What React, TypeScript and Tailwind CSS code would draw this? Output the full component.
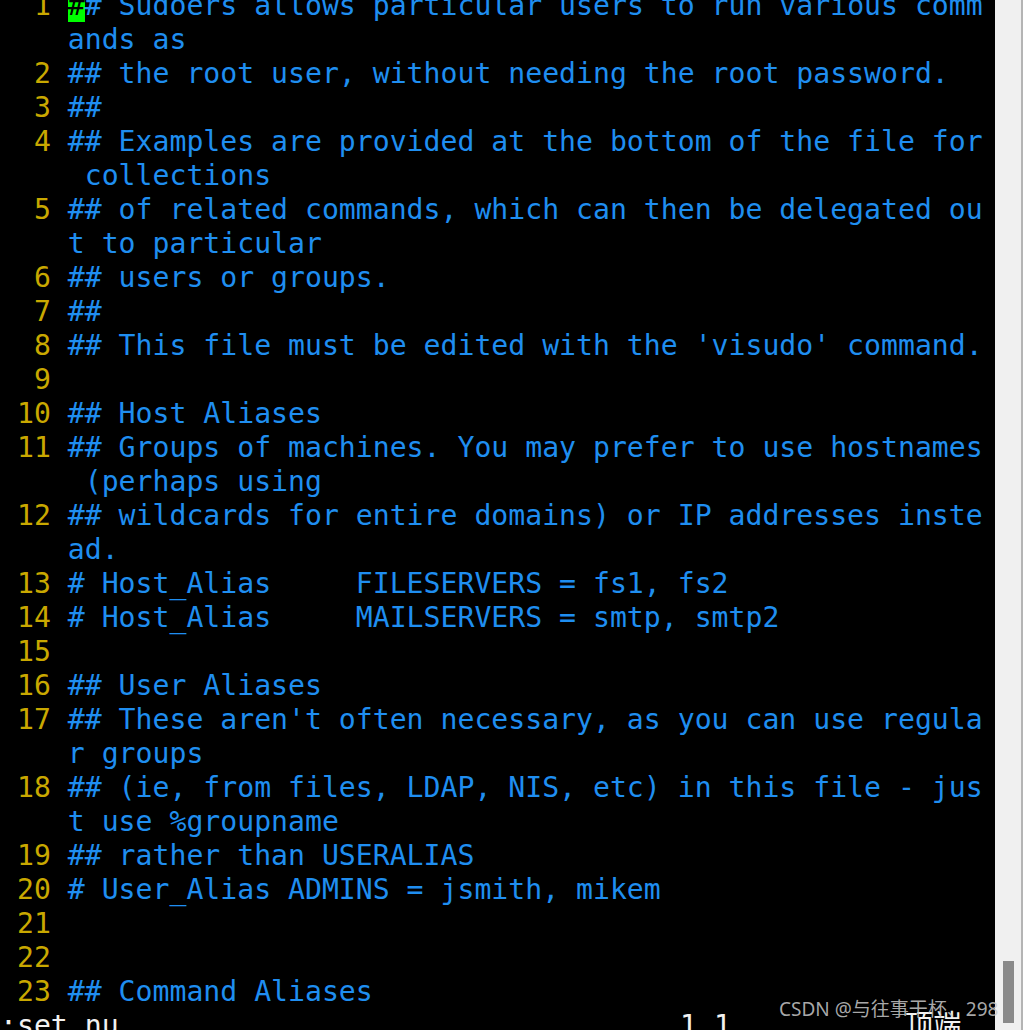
import React from "react";

type Row = { num?: string; text: string; cursor?: boolean };

const lines: { n: number; parts: string[] }[] = [
  { n: 1, parts: ["## Sudoers allows particular users to run various comm", "ands as"] },
  { n: 2, parts: ["## the root user, without needing the root password."] },
  { n: 3, parts: ["##"] },
  { n: 4, parts: ["## Examples are provided at the bottom of the file for", " collections"] },
  { n: 5, parts: ["## of related commands, which can then be delegated ou", "t to particular"] },
  { n: 6, parts: ["## users or groups."] },
  { n: 7, parts: ["##"] },
  { n: 8, parts: ["## This file must be edited with the 'visudo' command."] },
  { n: 9, parts: [""] },
  { n: 10, parts: ["## Host Aliases"] },
  { n: 11, parts: ["## Groups of machines. You may prefer to use hostnames", " (perhaps using"] },
  { n: 12, parts: ["## wildcards for entire domains) or IP addresses inste", "ad."] },
  { n: 13, parts: ["# Host_Alias     FILESERVERS = fs1, fs2"] },
  { n: 14, parts: ["# Host_Alias     MAILSERVERS = smtp, smtp2"] },
  { n: 15, parts: [""] },
  { n: 16, parts: ["## User Aliases"] },
  { n: 17, parts: ["## These aren't often necessary, as you can use regula", "r groups"] },
  { n: 18, parts: ["## (ie, from files, LDAP, NIS, etc) in this file - jus", "t use %groupname"] },
  { n: 19, parts: ["## rather than USERALIAS"] },
  { n: 20, parts: ["# User_Alias ADMINS = jsmith, mikem"] },
  { n: 21, parts: [""] },
  { n: 22, parts: [""] },
  { n: 23, parts: ["## Command Aliases"] },
];

const rows: Row[] = [];
lines.forEach((l) => {
  l.parts.forEach((p, i) => {
    rows.push({ num: i === 0 ? String(l.n).padStart(3, " ") + " " : "    ", text: p, cursor: l.n === 1 && i === 0 });
  });
});

export default function App() {
  return (
    <div className="relative flex h-[1030px] w-[1023px] overflow-hidden bg-black">
      <div
        className="w-[995px] overflow-hidden bg-black text-[28.15px] leading-[34px] whitespace-pre"
        style={{ fontFamily: "'DejaVu Sans Mono', 'Noto Sans CJK SC', monospace" }}
      >
        <div className="-mt-[11px]">
          {rows.map((r, i) => (
            <div key={i} className="h-[34px]">
              <span className="text-[#c9a800]">{r.num}</span>
              {r.cursor ? (
                <>
                  <span className="bg-[#00ff00] text-black">{r.text[0]}</span>
                  <span className="text-[#1f8ef0]">{r.text.slice(1)}</span>
                </>
              ) : (
                <span className="text-[#1f8ef0]">{r.text}</span>
              )}
            </div>
          ))}
          <div className="flex h-[34px] text-[#f2f2f2]">
            <span className="w-[680px]">:set nu</span>
            <span className="w-[225px]">1,1</span>
            <span>顶端</span>
          </div>
        </div>
      </div>
      <div className="flex w-[26px] flex-col justify-end bg-[#f0f0f0] pb-[7px] pl-[8px]">
        <div className="h-[62px] w-[11px] bg-[#8a8a8a]" />
      </div>
      <div className="w-[2px] bg-[#b4b4b4]" />
      <div
        className="absolute left-[779px] top-[996px] text-[19px] leading-[26px] text-[#c8c8c8]/85"
        style={{ fontFamily: "'Noto Sans', 'Noto Sans CJK SC', sans-serif" }}
      >
        CSDN @与往事干杯、298
      </div>
    </div>
  );
}
